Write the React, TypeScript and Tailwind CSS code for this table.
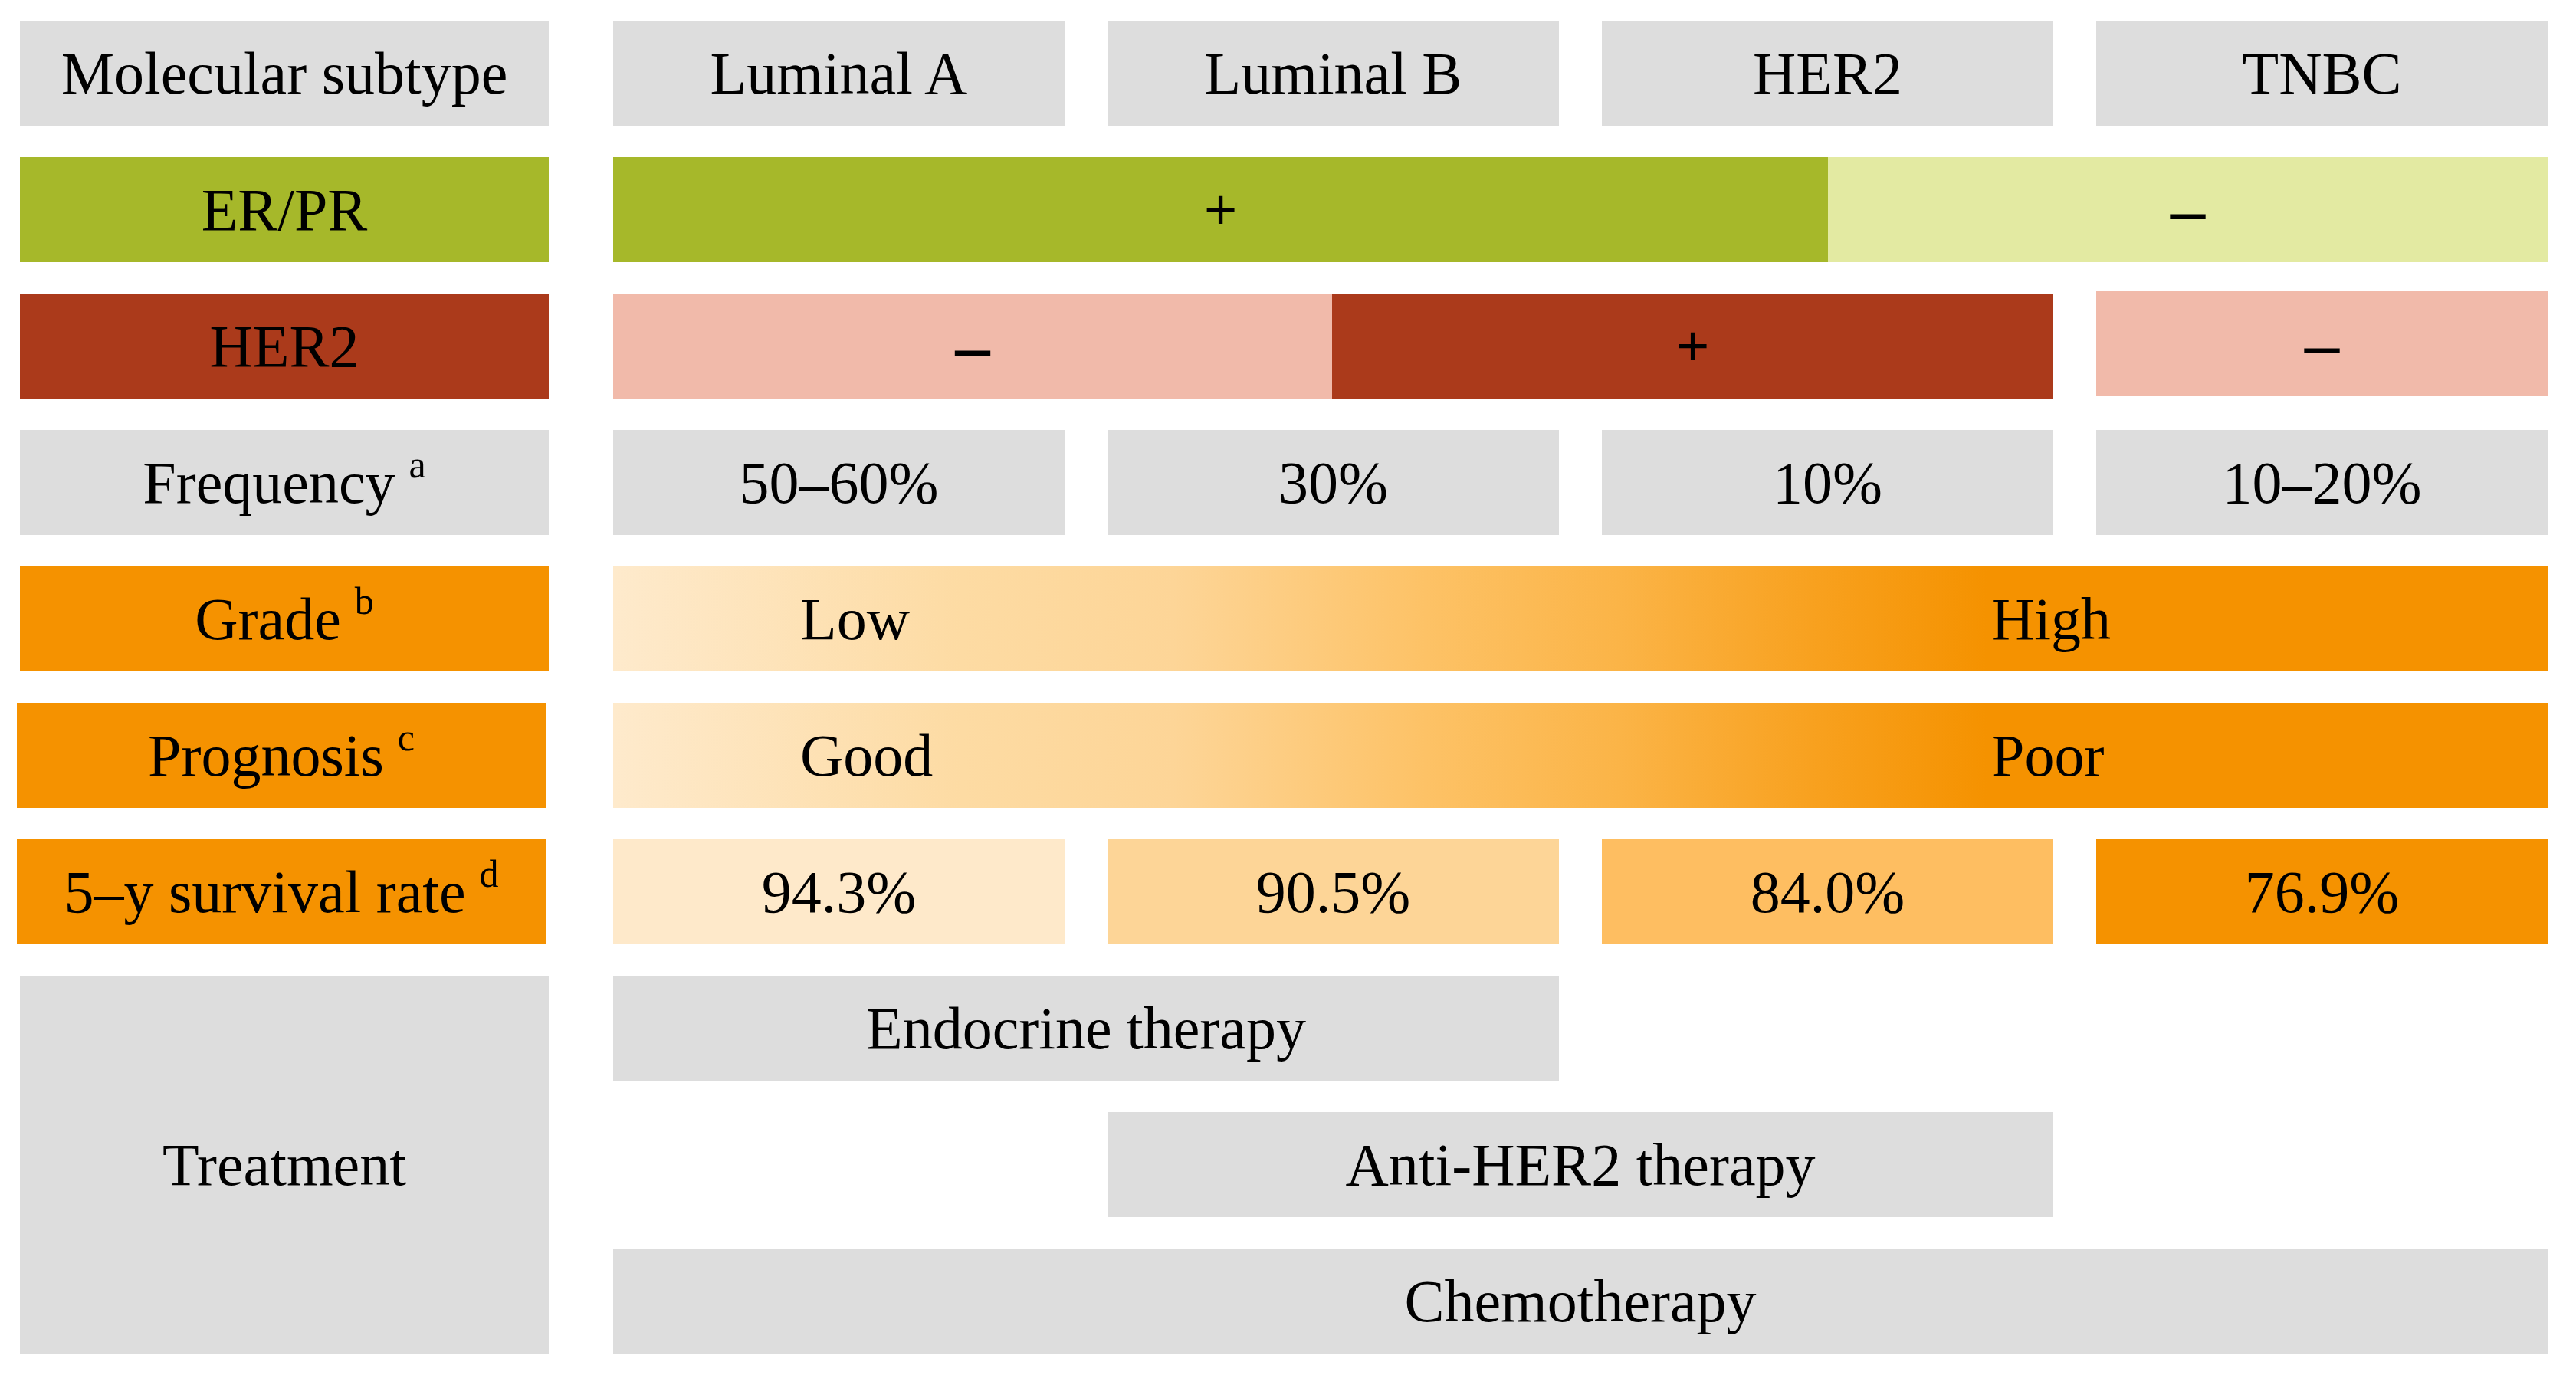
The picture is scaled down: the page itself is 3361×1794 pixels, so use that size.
import type { ReactNode } from "react";

// molecular subtype summary table, laid out as rows of colored blocks
const SUBTYPES = ["Luminal A", "Luminal B", "HER2", "TNBC"];
const FREQ = ["50–60%", "30%", "10%", "10–20%"];
const SURVIVAL = [
  { v: "94.3%", bg: "bg-[#FEE9CA]" },
  { v: "90.5%", bg: "bg-[#FDD597]" },
  { v: "84.0%", bg: "bg-[#FEBE61]" },
  { v: "76.9%", bg: "bg-[#F59200]" },
];

function Sup({ children }: { children: ReactNode }) {
  return <span className="relative -top-[24px] ml-[18px] text-[50px]">{children}</span>;
}

function Label({ bg, className = "", children }: { bg: string; className?: string; children: ReactNode }) {
  return (
    <div className={`relative flex h-[137px] w-[690px] shrink-0 items-center justify-center ${bg} ${className}`}>
      {children}
    </div>
  );
}

function Cell({ bg, className = "", children }: { bg: string; className?: string; children?: ReactNode }) {
  return (
    <div className={`flex h-[137px] items-center justify-center ${bg} ${className}`}>{children}</div>
  );
}

function Plus() {
  return <span className="font-['Liberation_Sans',sans-serif] text-[74px] leading-none">+</span>;
}

function Minus() {
  return (
    <span className="relative top-[5px] font-['DejaVu_Sans',sans-serif] text-[52px] font-bold leading-none">
      —
    </span>
  );
}

function Row({ label, children }: { label: ReactNode; children: ReactNode }) {
  return (
    <div className="flex gap-[84px]">
      {label}
      <div className="grid w-[2524px] grid-cols-[repeat(4,589px)] gap-x-[56px]">{children}</div>
    </div>
  );
}

export default function App() {
  return (
    <div className="h-[1794px] w-[3361px] bg-white pl-[26px] pt-[27px] font-['Liberation_Serif',serif] text-[78px] leading-none text-black">
      <div className="flex flex-col gap-[41px]">
        <Row label={<Label bg="bg-[#DDDDDD]">Molecular subtype</Label>}>
          {SUBTYPES.map((s) => (
            <Cell key={s} bg="bg-[#DDDDDD]">
              {s}
            </Cell>
          ))}
        </Row>

        <Row label={<Label bg="bg-[#A6B82A]">ER/PR</Label>}>
          <div className="col-span-4 flex">
            <Cell bg="bg-[#A6B82A]" className="w-[1585px]">
              <Plus />
            </Cell>
            <Cell bg="bg-[#E3EAA2]" className="flex-1">
              <Minus />
            </Cell>
          </div>
        </Row>

        <Row label={<Label bg="bg-[#AB3A1B]">HER2</Label>}>
          <div className="col-span-3 flex">
            <Cell bg="bg-[#F1BAAA]" className="w-[938px]">
              <Minus />
            </Cell>
            <Cell bg="bg-[#AB3A1B]" className="flex-1">
              <Plus />
            </Cell>
          </div>
          <Cell bg="bg-[#F1BAAA]" className="-mt-[3px]">
            <Minus />
          </Cell>
        </Row>

        <Row
          label={
            <Label bg="bg-[#DDDDDD]">
              Frequency<Sup>a</Sup>
            </Label>
          }
        >
          {FREQ.map((f) => (
            <Cell key={f} bg="bg-[#DDDDDD]">
              {f}
            </Cell>
          ))}
        </Row>

        {[
          { label: "Grade", sup: "b", lo: "Low", hi: "High", shift: "" },
          { label: "Prognosis", sup: "c", lo: "Good", hi: "Poor", shift: "-left-[4px]" },
        ].map((r) => (
          <Row
            key={r.label}
            label={
              <Label bg="bg-[#F59200]" className={r.shift}>
                {r.label}
                <Sup>{r.sup}</Sup>
              </Label>
            }
          >
            <div className="col-span-4 flex h-[137px] items-center bg-[linear-gradient(to_right,#FEEACC_0%,#FDDBA3_18%,#FDD597_29%,#FDC266_42%,#FBB447_52%,#F8A11F_62%,#F59200_71%,#F59200_100%)]">
              <span className="ml-[244px] w-[1554px]">{r.lo}</span>
              <span>{r.hi}</span>
            </div>
          </Row>
        ))}

        <Row
          label={
            <Label bg="bg-[#F59200]" className="-left-[4px]">
              5–y survival rate<Sup>d</Sup>
            </Label>
          }
        >
          {SURVIVAL.map((s) => (
            <Cell key={s.v} bg={s.bg}>
              {s.v}
            </Cell>
          ))}
        </Row>

        <div className="flex gap-[84px]">
          <div className="flex h-[493px] w-[690px] shrink-0 items-center justify-center bg-[#DDDDDD]">
            Treatment
          </div>
          <div className="grid w-[2524px] grid-cols-[repeat(4,589px)] gap-x-[56px] gap-y-[41px]">
            <Cell bg="bg-[#DDDDDD]" className="col-span-2">
              Endocrine therapy
            </Cell>
            <Cell bg="bg-[#DDDDDD]" className="col-span-2 col-start-2">
              Anti-HER2 therapy
            </Cell>
            <Cell bg="bg-[#DDDDDD]" className="col-span-4">
              Chemotherapy
            </Cell>
          </div>
        </div>
      </div>
    </div>
  );
}
